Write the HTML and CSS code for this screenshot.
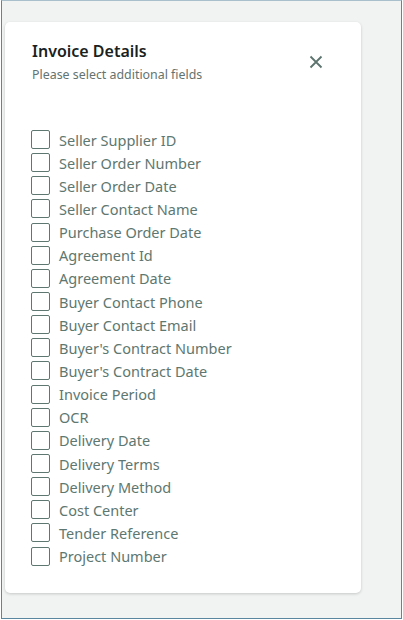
FILE: index.html
```html
<!DOCTYPE html>
<html>
<head>
<meta charset="utf-8">
<link rel="stylesheet" href="styles.css">
</head>
<body>
<div class="frame">
  <div class="card">
    <div class="header">
      <div class="titles">
        <div class="title">Invoice Details</div>
        <div class="subtitle">Please select additional fields</div>
      </div>
      <button class="close" aria-label="Close">
        <svg width="14" height="14" viewBox="0 0 14 14"><path d="M1.5 1.5 L12.5 12.5 M12.5 1.5 L1.5 12.5" stroke="#5d736d" stroke-width="1.8" fill="none"/></svg>
      </button>
    </div>
    <ul class="fields">
      <li><span class="box"></span>Seller Supplier ID</li>
      <li><span class="box"></span>Seller Order Number</li>
      <li><span class="box"></span>Seller Order Date</li>
      <li><span class="box"></span>Seller Contact Name</li>
      <li><span class="box"></span>Purchase Order Date</li>
      <li><span class="box"></span>Agreement Id</li>
      <li><span class="box"></span>Agreement Date</li>
      <li><span class="box"></span>Buyer Contact Phone</li>
      <li><span class="box"></span>Buyer Contact Email</li>
      <li><span class="box"></span>Buyer's Contract Number</li>
      <li><span class="box"></span>Buyer's Contract Date</li>
      <li><span class="box"></span>Invoice Period</li>
      <li><span class="box"></span>OCR</li>
      <li><span class="box"></span>Delivery Date</li>
      <li><span class="box"></span>Delivery Terms</li>
      <li><span class="box"></span>Delivery Method</li>
      <li><span class="box"></span>Cost Center</li>
      <li><span class="box"></span>Tender Reference</li>
      <li><span class="box"></span>Project Number</li>
    </ul>
  </div>
</div>
</body>
</html>
```
FILE: styles.css
```css
html, body {
  margin: 0;
  padding: 0;
  background: #ffffff;
}
body {
  font-family: "Noto Sans", "Open Sans", sans-serif;
}
.frame {
  box-sizing: border-box;
  width: 401px;
  height: 619px;
  margin-left: 1px;
  border: 1px solid #5b86a0;
  border-top-color: #a9bfcc;
  background: #f1f3f3;
  padding: 21px 0 0 3px;
}
.card {
  box-sizing: border-box;
  width: 356px;
  height: 571px;
  background: #ffffff;
  border-radius: 5px;
  box-shadow: 0 1px 3px rgba(0,0,0,0.18);
  padding: 17px 26px 0 26px;
}
.header {
  display: flex;
  justify-content: space-between;
  align-items: flex-start;
}
.titles {
  padding-left: 1px;
}
.title {
  font-size: 16px;
  font-weight: 600;
  color: #1b1f1e;
  line-height: 24px;
}
.subtitle {
  font-size: 12.4px;
  color: #64736f;
  line-height: 16px;
  margin-top: 4px;
}
.close {
  border: 0;
  background: none;
  padding: 0;
  margin: 15px 11px 0 0;
  width: 16px;
  height: 16px;
  display: flex;
  align-items: center;
  justify-content: center;
}
.fields {
  list-style: none;
  margin: 45px 0 0 0;
  padding: 0;
}
.fields li {
  display: flex;
  align-items: center;
  height: 23.15px;
  font-size: 14.5px;
  color: #5e7770;
}
.box {
  box-sizing: border-box;
  width: 19px;
  height: 19px;
  border: 1px solid #5e7770;
  border-radius: 2px;
  margin-right: 9px;
  flex: none;
}
```
